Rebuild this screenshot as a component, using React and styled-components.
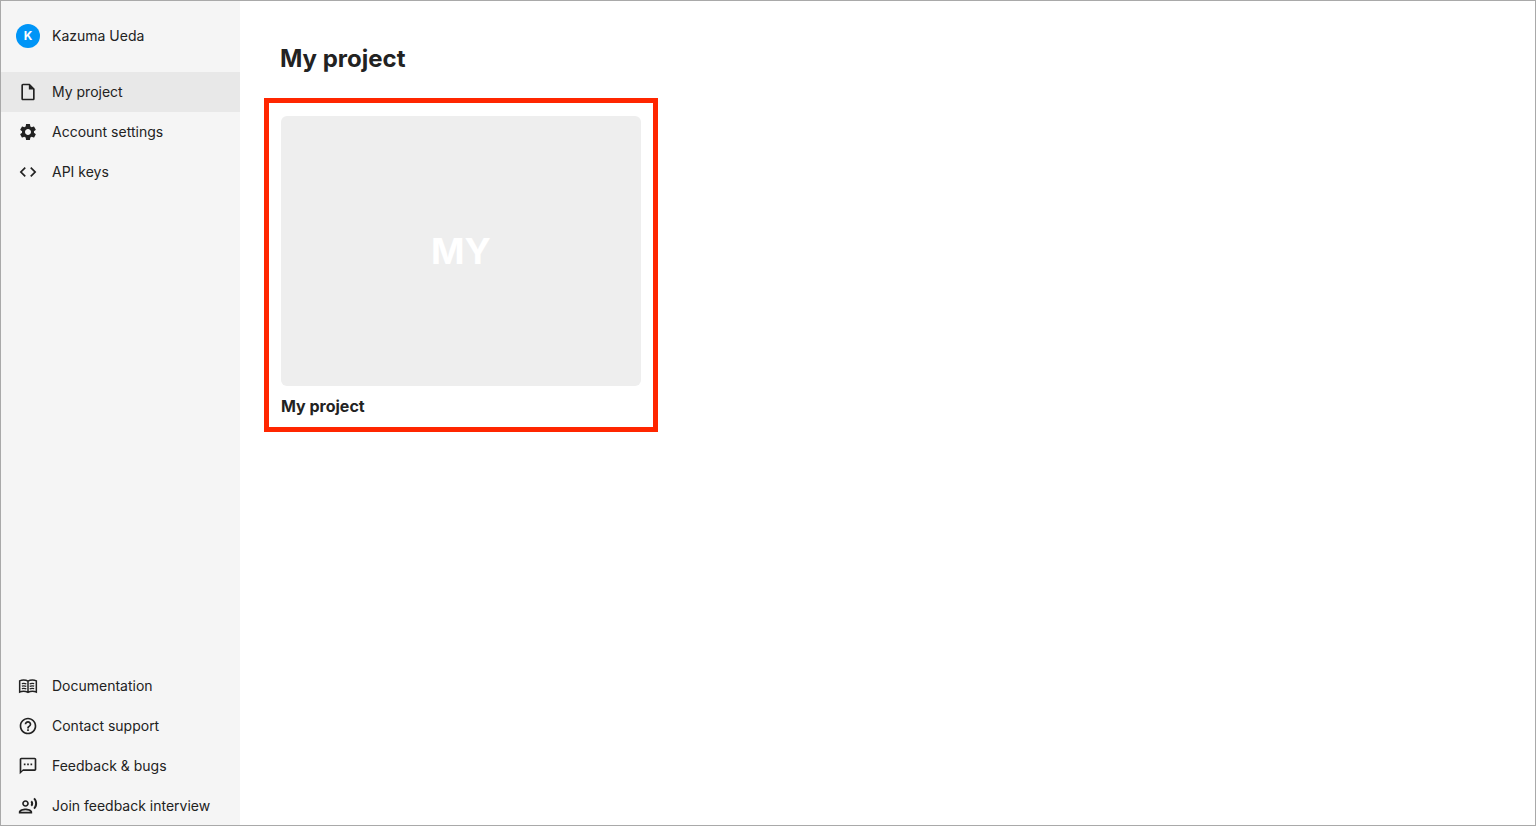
import React from "react";
import styled, { createGlobalStyle } from "styled-components";
import {
  MdOutlineInsertDriveFile,
  MdSettings,
  MdCode,
  MdHelpOutline,
  MdOutlineTextsms,
  MdOutlineRecordVoiceOver,
} from "react-icons/md";

const GlobalStyle = createGlobalStyle`
  *, *::before, *::after { box-sizing: border-box; }
  body {
    margin: 0;
    background: #ffffff;
    color: #222222;
    font-family: Inter, "Liberation Sans", sans-serif;
    font-size: 14px;
    font-weight: 400;
    line-height: 20px;
  }
`;

const Page = styled.div`
  position: relative;
  display: flex;
  min-height: 100vh;

  &::after {
    content: "";
    position: absolute;
    inset: 0;
    border: 1px solid #a9a9a9;
    pointer-events: none;
  }
`;

const Sidebar = styled.aside`
  display: flex;
  flex-direction: column;
  justify-content: space-between;
  flex: 0 0 240px;
  background: #f5f5f5;
`;

const Account = styled.button`
  display: flex;
  align-items: center;
  gap: 12px;
  width: 100%;
  height: 72px;
  padding: 0 16px;
  border: 0;
  background: none;
  color: inherit;
  font: inherit;
  cursor: pointer;
`;

const Avatar = styled.span`
  display: flex;
  align-items: center;
  justify-content: center;
  width: 24px;
  height: 24px;
  border-radius: 50%;
  background: #0095f7;
  color: #ffffff;
  font-size: 12px;
  font-weight: 700;
`;

const NavList = styled.ul`
  margin: 0;
  padding: 0;
  list-style: none;
`;

const NavLink = styled.a`
  display: flex;
  align-items: center;
  gap: 12px;
  height: 40px;
  padding: 0 16px;
  background: ${({ $active }) => ($active ? "#e8e8e8" : "transparent")};
  color: inherit;
  text-decoration: none;
`;

const IconBox = styled.span`
  display: flex;
  align-items: center;
  justify-content: center;
  width: 24px;
  height: 24px;
  font-size: 20px;
`;

const Main = styled.main`
  flex: 1;
  min-width: 0;
  padding: 43px 24px 24px;
`;

const Title = styled.h1`
  margin: 0 0 23px;
  padding-left: 16px;
  font-size: 24px;
  font-weight: 700;
  line-height: 32px;
`;

const ProjectCard = styled.a`
  display: block;
  width: fit-content;
  max-width: 100%;
  padding: 13px 12px 9px;
  border: 5px solid #ff2600;
  color: inherit;
  text-decoration: none;
`;

const Thumbnail = styled.div`
  display: flex;
  align-items: center;
  justify-content: center;
  width: 360px;
  max-width: 100%;
  aspect-ratio: 4 / 3;
  border-radius: 6px;
  background: #eeeeee;
  color: #ffffff;
  font-size: 36px;
  font-weight: 700;
`;

const ProjectName = styled.h2`
  margin: 8px 0 0;
  font-size: 16px;
  font-weight: 700;
  line-height: 24px;
`;

function OpenBookIcon(props) {
  return (
    <svg width="1em" height="1em" viewBox="0 0 24 24" fill="none" stroke="currentColor" {...props}>
      <path
        strokeWidth="1.8"
        d="M12 6.2C10.4 5.2 8.6 4.9 6.6 4.9C4.9 4.9 3.4 5.2 2 5.8V19.2C3.4 18.6 4.9 18.3 6.6 18.3C8.6 18.3 10.4 18.8 12 19.7C13.6 18.8 15.4 18.3 17.4 18.3C19.1 18.3 20.6 18.6 22 19.2V5.8C20.6 5.2 19.1 4.9 17.4 4.9C15.4 4.9 13.6 5.2 12 6.2ZM12 6.2V19.5"
      />
      <path
        strokeWidth="1.5"
        d="M4.6 9.2C6.5 8.6 8.3 8.7 10 9.4M4.6 12.2C6.5 11.6 8.3 11.7 10 12.4M4.6 15.2C6.5 14.6 8.3 14.7 10 15.4M14 9.4C15.7 8.7 17.5 8.6 19.4 9.2M14 12.4C15.7 11.7 17.5 11.6 19.4 12.2M14 15.4C15.7 14.7 17.5 14.6 19.4 15.2"
      />
    </svg>
  );
}

const mainLinks = [
  { label: "My project", icon: MdOutlineInsertDriveFile, active: true },
  { label: "Account settings", icon: MdSettings },
  { label: "API keys", icon: MdCode },
];

const helpLinks = [
  { label: "Documentation", icon: OpenBookIcon },
  { label: "Contact support", icon: MdHelpOutline },
  { label: "Feedback & bugs", icon: MdOutlineTextsms },
  { label: "Join feedback interview", icon: MdOutlineRecordVoiceOver },
];

function Nav({ label, links }) {
  return (
    <nav aria-label={label}>
      <NavList>
        {links.map(({ label: text, icon: Icon, active }) => (
          <li key={text}>
            <NavLink href="#" $active={active} aria-current={active ? "page" : undefined}>
              <IconBox>
                <Icon aria-hidden="true" />
              </IconBox>
              {text}
            </NavLink>
          </li>
        ))}
      </NavList>
    </nav>
  );
}

export default function App() {
  return (
    <>
      <GlobalStyle />
      <Page>
        <Sidebar>
          <div>
            <Account type="button">
              <Avatar>K</Avatar>
              Kazuma Ueda
            </Account>
            <Nav label="Main" links={mainLinks} />
          </div>
          <Nav label="Help" links={helpLinks} />
        </Sidebar>
        <Main>
          <Title>My project</Title>
          <ProjectCard href="#">
            <Thumbnail>MY</Thumbnail>
            <ProjectName>My project</ProjectName>
          </ProjectCard>
        </Main>
      </Page>
    </>
  );
}
